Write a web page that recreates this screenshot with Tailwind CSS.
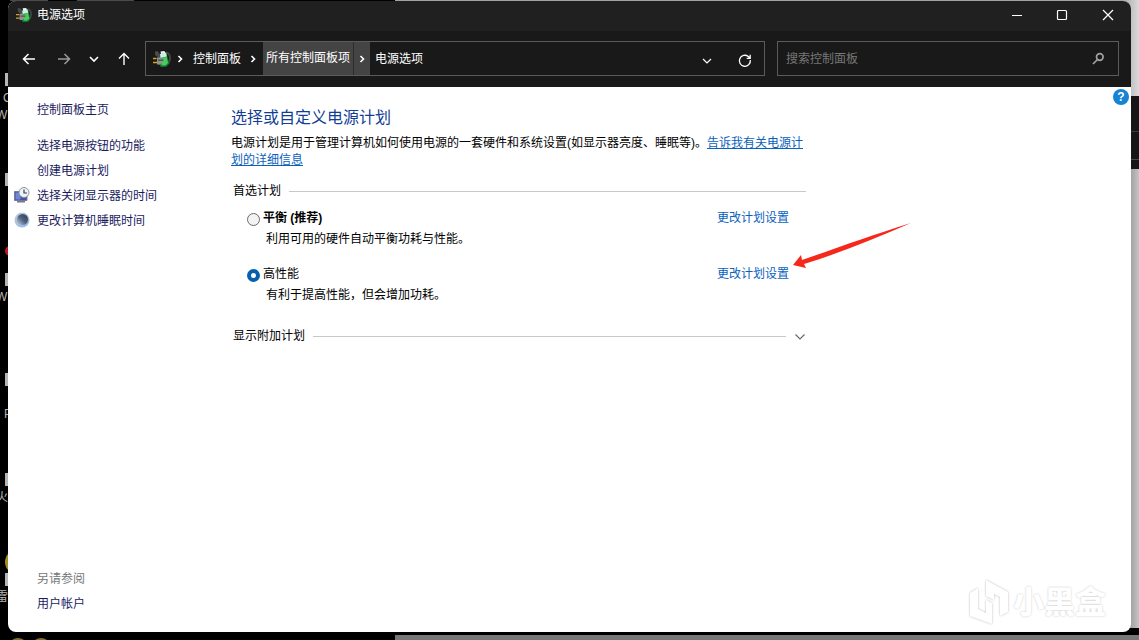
<!DOCTYPE html>
<html lang="zh-CN">
<head>
<meta charset="utf-8">
<meta name="viewport" content="width=device-width, initial-scale=1">
<title>电源选项</title>
<script src="https://cdn.jsdelivr.net/npm/@tailwindcss/browser@4"></script>
</head>
<body class="relative flex min-h-screen overflow-hidden bg-black px-2 pt-px pb-2 font-['Liberation_Sans','Noto_Sans_CJK_SC',sans-serif] text-xs text-black">

<svg class="hidden" aria-hidden="true">
  <symbol id="power-icon" viewBox="0 0 18 18">
    <path d="M2 1.500 4.500 1l4 5-2 2.500L2 5z" fill="#4a4a4a"/>
    <path d="M13 2.500c3 .5 4 3 4 5.500s-1 5-3 6.500" fill="none" stroke="#3e4442" stroke-width="2"/>
    <path d="M7 4.500 13.500 3 16 13.500 13.500 16.500 8 17 6 14z" fill="#1f7d38"/>
    <path d="M7 4l6-1.500.8 4L7.500 8z" fill="#cdeee4"/>
    <path d="M7.500 1.500 11.500 1l.7 2L8 4z" fill="#eef8fb"/>
    <path d="M8 9l5.500-2.500L15 13l-3 2.500L8.500 15z" fill="#43cf5a"/>
    <path d="M4 7.500h3l4.500 3L7 14.500H4z" fill="#8f9491"/>
    <path d="M5 9.500h5.500v1.500H5z" fill="#4f5551"/>
    <path d="M0 8.500h3.500M0 12.500h4" stroke="#d5a51f" stroke-width="1.300"/>
  </symbol>
</svg>

<!-- Desktop behind the window -->
<div class="absolute inset-0 overflow-hidden text-[#b5b5b5]" aria-hidden="true">
  <div class="absolute top-0 right-0 left-[395px] h-2 bg-[#a0a3a3]"></div>
  <div class="absolute top-0 left-[10px] h-px w-[38px] bg-[#4a4a4a]"></div>
  <div class="absolute top-0 left-[77px] h-px w-[57px] bg-[#4a4a4a]"></div>
  <div class="absolute inset-y-0 right-0 w-4 bg-gradient-to-r from-[#858585] to-[#c4c4c4]"></div>
  <div class="absolute top-0 right-0 h-24 w-4 bg-gradient-to-r from-[#aaaaaa] to-[#dadada]"></div>
  <div class="absolute top-24 right-0 h-[73px] w-4 bg-[#161616]"></div>
  <div class="absolute top-[131px] right-0 h-px w-4 bg-[#3c3c3c]"></div>
  <div class="absolute top-[159px] right-0 h-px w-4 bg-[#4a4a4a]"></div>
  <div class="absolute right-0 bottom-[5px] h-[7px] w-full bg-black"></div>
  <div class="absolute right-0 bottom-0 left-[395px] h-[5px] bg-[#777777]"></div>
  <div class="absolute top-[73px] left-[5px] h-[13px] w-1 bg-[#b5b5b5]"></div>
  <div class="absolute top-[173px] left-[5px] h-[13px] w-1 bg-[#b5b5b5]"></div>
  <div class="absolute top-[273px] left-[5px] h-[13px] w-1 bg-[#b5b5b5]"></div>
  <div class="absolute top-[373px] left-[5px] h-[13px] w-1 bg-[#b5b5b5]"></div>
  <div class="absolute top-[473px] left-[5px] h-[13px] w-1 bg-[#b5b5b5]"></div>
  <div class="absolute top-[573px] left-[5px] h-[13px] w-1 bg-[#b5b5b5]"></div>
  <span class="absolute top-[90px] left-[3px]">C</span>
  <span class="absolute top-[107px] -left-1">W</span>
  <span class="absolute top-[289px] -left-1">W</span>
  <span class="absolute top-[406px] left-[4px]">P</span>
  <span class="absolute top-[489px] -left-1">火</span>
  <span class="absolute top-[589px] -left-1">雷</span>
  <div class="absolute top-[246px] left-[5px] size-[10px] rounded-full bg-[#c01823]"></div>
  <div class="absolute top-[550px] left-[5px] size-6 rounded-full bg-[#a58d20]"></div>
  <div class="absolute top-[638px] left-[8px] h-3 w-5 rounded-t-full bg-[#82732a]"></div>
  <div class="absolute top-[638px] left-[31px] h-3 w-5 rounded-t-full bg-[#82732a]"></div>
</div>

<div class="relative flex min-w-0 flex-1 flex-col overflow-hidden rounded-lg bg-white">
  <header class="flex h-[30px] items-center bg-[#202020] pb-[2px] pl-2 text-white">
    <svg class="size-4"><use href="#power-icon"/></svg>
    <h1 class="ml-[5px] flex-1 leading-7">电源选项</h1>
    <div class="flex">
      <button type="button" aria-label="最小化" class="flex h-7 w-[45px] items-center justify-center">
        <svg class="size-3" viewBox="0 0 12 12" fill="none" stroke="currentColor"><path d="M1 6.500h10"/></svg>
      </button>
      <button type="button" aria-label="最大化" class="flex h-7 w-[46px] items-center justify-center">
        <svg class="size-3" viewBox="0 0 12 12" fill="none" stroke="currentColor" stroke-width="1.200"><rect x="1.500" y="1.500" width="9" height="9" rx="1"/></svg>
      </button>
      <button type="button" aria-label="关闭" class="flex h-7 w-[46px] items-center justify-center">
        <svg class="size-3" viewBox="0 0 12 12" fill="none" stroke="currentColor" stroke-width="1.200"><path d="M1 1l10 10M11 1 1 11"/></svg>
      </button>
    </div>
  </header>

  <nav class="flex h-14 items-center bg-[#191919] pr-3 pb-px pl-[13px] text-white" aria-label="导航">
    <button type="button" aria-label="后退" class="flex size-4 items-center justify-center">
      <svg class="size-[14px]" viewBox="0 0 14 14" fill="none" stroke="currentColor" stroke-width="1.500"><path d="M13 7H2M6.500 2 1.500 7l5 5"/></svg>
    </button>
    <button type="button" aria-label="前进" class="ml-[19px] flex size-4 items-center justify-center text-[#9b9b9b]">
      <svg class="size-[14px]" viewBox="0 0 14 14" fill="none" stroke="currentColor" stroke-width="1.500"><path d="M1 7h11M7.500 2l5 5-5 5"/></svg>
    </button>
    <button type="button" aria-label="最近的位置" class="ml-[14px] flex size-4 items-center justify-center">
      <svg class="h-2 w-3" viewBox="0 0 12 8" fill="none" stroke="currentColor" stroke-width="1.600"><path d="M2 2l4 4 4-4"/></svg>
    </button>
    <button type="button" aria-label="向上" class="ml-[14px] flex size-4 items-center justify-center">
      <svg class="size-[14px]" viewBox="0 0 14 14" fill="none" stroke="currentColor" stroke-width="1.400"><path d="M7 13V2M2 6.500l5-5 5 5"/></svg>
    </button>

    <div class="ml-[13px] flex h-[35px] min-w-0 flex-1 items-center border border-[#5b5b5b] pl-[7px]">
      <svg class="size-[18px] shrink-0"><use href="#power-icon"/></svg>
      <svg class="ml-[6px] h-2 w-[6px] shrink-0" viewBox="0 0 6 8" fill="none" stroke="currentColor" stroke-width="1.600"><path d="M1.500 1l3 3-3 3"/></svg>
      <a href="#" class="ml-[10px] shrink-0 leading-8">控制面板</a>
      <svg class="ml-[9px] h-2 w-[6px] shrink-0" viewBox="0 0 6 8" fill="none" stroke="currentColor" stroke-width="1.600"><path d="M1.500 1l3 3-3 3"/></svg>
      <a href="#" class="ml-[7px] h-full shrink-0 bg-[#444444] px-[3px] leading-8">所有控制面板项</a>
      <button type="button" aria-label="展开" class="flex h-full w-[17px] shrink-0 items-center justify-center border-l border-[#2c2c2c] bg-[#444444]">
        <svg class="h-2 w-[6px]" viewBox="0 0 6 8" fill="none" stroke="currentColor" stroke-width="1.600"><path d="M1.500 1l3 3-3 3"/></svg>
      </button>
      <a href="#" class="ml-[5px] shrink-0 leading-8">电源选项</a>
      <button type="button" aria-label="以前的位置" class="ml-auto flex size-5 items-center justify-center">
        <svg class="mt-1 h-2 w-[10px]" viewBox="0 0 10 8" fill="none" stroke="currentColor" stroke-width="1.200"><path d="M1 2l4 4 4-4"/></svg>
      </button>
      <button type="button" aria-label="刷新" class="mr-[9px] ml-[18px] flex size-5 items-center justify-center">
        <svg class="mt-1 size-[14px]" viewBox="0 0 14 14" fill="none" stroke="currentColor" stroke-width="1.300"><path d="M12.300 6a5.500 5.500 0 1 1-2-3.500L12 4M12.200 .8v3.500H8.700"/></svg>
      </button>
    </div>

    <label class="ml-3 flex h-[35px] w-[342px] items-center border border-[#5b5b5b] pr-[13px] pl-2">
      <input type="search" aria-label="搜索控制面板" placeholder="搜索控制面板" class="min-w-0 flex-1 bg-transparent leading-8 outline-none placeholder:text-[#777777]">
      <svg class="size-[14px]" viewBox="0 0 14 14" fill="none" stroke="#a0a0a0" stroke-width="1.700"><circle cx="8.800" cy="5" r="3.300"/><path d="M6.500 7.500 2 12"/></svg>
    </label>
  </nav>

  <div class="relative flex flex-1">
    <aside class="flex w-[223px] shrink-0 flex-col pt-[11px] pb-[15px] pl-[6px] leading-[25px] text-[#1b1b60]">
      <a href="#" class="pl-[23px]">控制面板主页</a>
      <ul class="mt-[11px]">
        <li class="pl-[23px]"><a href="#">选择电源按钮的功能</a></li>
        <li class="pl-[23px]"><a href="#">创建电源计划</a></li>
        <li><a href="#" class="flex items-start gap-[7px]">
          <svg class="mt-[3px] size-4" viewBox="0 0 16 16">
            <path d="M.5 4.500h12.500v9H.5z" fill="#4253ad" stroke="#777c94"/>
            <path d="M1.500 5.500h5v7h-5z" fill="#6f86d4"/>
            <path d="M3 14h8v1.500H3z" fill="#777b86"/>
            <circle cx="10" cy="5.500" r="5" fill="#eef3f8" stroke="#8b939e"/>
            <path d="M10 2.500v3.500h3" fill="none" stroke="#39404f" stroke-width="1.200"/>
          </svg>选择关闭显示器的时间</a></li>
        <li><a href="#" class="flex items-start gap-[7px]">
          <svg class="mt-[3px] size-4" viewBox="0 0 16 16">
            <defs>
              <linearGradient id="moon-rim" x1="0" y1="0" x2="1" y2="1"><stop offset="0" stop-color="#c3ccd0"/><stop offset="1" stop-color="#8db8ea"/></linearGradient>
              <linearGradient id="moon-shade" x1="1" y1="0" x2="0" y2="1"><stop offset="0" stop-color="#2c3a52"/><stop offset="0.500" stop-color="#50617f"/><stop offset="1" stop-color="#c5d3e8"/></linearGradient>
            </defs>
            <circle cx="8" cy="8" r="7.500" fill="url(#moon-rim)"/>
            <circle cx="8.500" cy="7.500" r="5.500" fill="url(#moon-shade)"/>
          </svg>更改计算机睡眠时间</a></li>
      </ul>
      <h2 class="mt-auto pl-[23px] text-[#777777]">另请参阅</h2>
      <a href="#" class="pl-[23px]">用户帐户</a>
    </aside>

    <main class="min-w-0 max-w-[575px] flex-1 pt-[19px]">
      <h2 class="text-base leading-6 text-[#123d96]">选择或自定义电源计划</h2>
      <p class="mt-[5px] leading-[17px]">电源计划是用于管理计算机如何使用电源的一套硬件和系统设置(如显示器亮度、睡眠等)。<a href="#" class="text-[#0a62bd] underline">告诉我有关电源计划的详细信息</a></p>

      <section aria-labelledby="preferred">
        <div class="mt-[14px] flex items-center gap-2 pl-[2px] leading-[17px]">
          <h3 id="preferred">首选计划</h3><span class="h-px flex-1 bg-[#c8c8c8]"></span>
        </div>
        <div class="mt-[10px] flex items-start pl-4">
          <input id="balanced" type="radio" name="plan" class="mt-[3px] size-[13px] shrink-0 appearance-none rounded-full border border-[#6b6b6b] bg-[#f3f3f3] checked:border-4 checked:border-[#075fae] checked:bg-white">
          <div class="ml-[3px] flex-1 leading-[17px]">
            <label for="balanced" class="font-bold">平衡 (推荐)</label>
            <p class="mt-1 pl-[3px]">利用可用的硬件自动平衡功耗与性能。</p>
          </div>
          <a href="#" class="mr-[17px] leading-[17px] text-[#0a62bd]">更改计划设置</a>
        </div>
        <div class="mt-[18px] flex items-start pl-4">
          <input id="performance" type="radio" name="plan" checked class="mt-[3px] size-[13px] shrink-0 appearance-none rounded-full border border-[#6b6b6b] bg-[#f3f3f3] checked:border-4 checked:border-[#075fae] checked:bg-white">
          <div class="ml-[3px] flex-1 leading-[17px]">
            <label for="performance">高性能</label>
            <p class="mt-1 pl-[3px]">有利于提高性能，但会增加功耗。</p>
          </div>
          <a href="#" class="mr-[17px] leading-[17px] text-[#0a62bd]">更改计划设置</a>
        </div>
      </section>

      <button type="button" class="mt-6 flex w-full items-center pl-[2px] leading-[17px]">
        <span>显示附加计划</span><span class="ml-2 h-px flex-1 bg-[#c8c8c8]"></span>
        <svg class="ml-2 h-2 w-3" viewBox="0 0 12 8" fill="none" stroke="#666666" stroke-width="1.100"><path d="M1.500 1.500 6 6l4.500-4.500"/></svg>
      </button>
    </main>

    <button type="button" aria-label="帮助" class="absolute top-[2px] right-[2px] flex size-4 items-center justify-center rounded-full bg-[#1683d3] font-bold text-white">?</button>

    <!-- Annotation arrow pointing at the second plan's link -->
    <svg class="absolute top-[134px] left-[784px] h-[52px] w-[120px]" viewBox="0 0 120 52" aria-hidden="true">
      <path d="M1 44 9 34l1 5C45 27 80 14 119 2 82 18 48 32 12 43l2 4z" fill="#f5281b"/>
    </svg>

    <div class="absolute right-[25px] bottom-[5px] flex items-center gap-1 text-white" aria-hidden="true">
      <svg class="h-12 w-10 drop-shadow-[0_0_1px_#bbbbbb]" viewBox="0 0 40 48"><path d="M9 9 1 14v23l22 8V24l-6-3v13l-8-4z" fill="#ffffff"/><path d="M17 1l22 12v20l-8 4V18l-6-3v6l-8-4z" fill="#ffffff"/></svg>
      <span class="text-[31px] leading-10 font-black [text-shadow:0_0_2px_#c4c4c4]">小黑盒</span>
    </div>
  </div>
</div>
</body>
</html>
